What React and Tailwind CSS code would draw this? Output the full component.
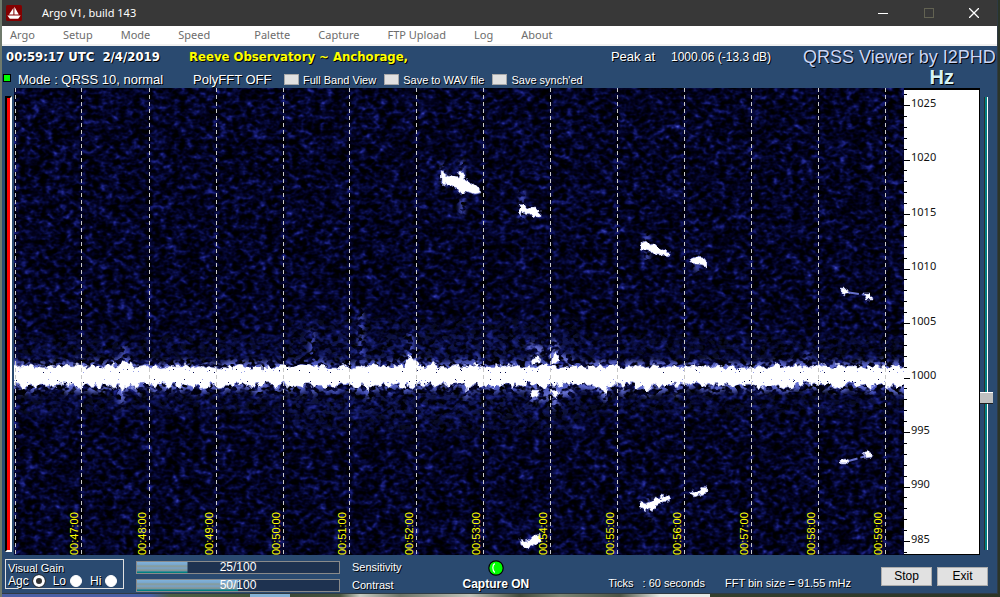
import React, { useState } from "react";

const MENU = ["Argo", "Setup", "Mode", "Speed", "Palette", "Capture", "FTP Upload", "Log", "About"];

// Spectrogram drawing space: x 14..904, y 88..555
const X0 = 14;
const Y0 = 88;
const W = 890;
const H = 467;

const MINUTES = [
  [81, "00:47:00"], [149, "00:48:00"], [216, "00:49:00"], [283, "00:50:00"],
  [349, "00:51:00"], [416, "00:52:00"], [483, "00:53:00"], [550, "00:54:00"],
  [617, "00:55:00"], [684, "00:56:00"], [751, "00:57:00"], [818, "00:58:00"],
  [885, "00:59:00"],
];

const TRACES = [
  "441,170 443,173 452,176 458,178 460,171 464,172 465,180 470,183 479,187 480,193 474,194 466,191 464,193 460,194 458,189 450,186 441,184",
  "519,204 523,205 530,208 536,208 540,211 540,217 535,217 530,214 524,213 520,216",
  "641,242 646,240 649,244 654,243 659,248 664,250 670,252 670,256 662,255 656,255 653,252 648,251 641,250",
  "690,259 697,257 702,258 707,260 707,268 703,265 697,264 691,263",
  "641,502 646,504 650,502 655,498 660,499 662,495 670,497 669,501 662,502 656,505 653,511 648,508 645,511 640,508",
  "689,492 694,491 697,492 702,490 703,486 707,487 707,493 699,495 695,497",
  "520,539 524,541 529,540 533,536 540,534 541,541 534,545 528,548 521,546",
  "841,289 847,289 850,293 845,295 841,293",
  "864,293 870,293 872,299 866,299",
  "841,460 845,459 849,460 846,464 841,464",
  "864,452 869,451 872,457 865,458",
  "531,360 538,357 541,361 532,364",
  "553,353 557,352 559,362 551,363",
  "531,390 541,390 538,395 532,397",
  "550,390 559,391 558,398 553,396",
];

function seeded(seed) {
  let s = seed;
  return () => {
    s = (s * 16807) % 2147483647;
    return s / 2147483647;
  };
}

const PEAKS = { 76: 4, 112: 3, 124: 7, 130: 4, 312: 5, 374: 4, 402: 4, 409: 9, 411: 12, 433: 4, 476: 4 };
const DIPS = { 122: 6, 137: 5, 169: 4, 368: 6, 401: 5, 468: 6, 605: 7, 646: 8 };

function bandPoints() {
  const rnd = seeded(4711);
  const top = [];
  const bottom = [];
  const bump = (map, x) =>
    Object.keys(map).reduce((m, k) => Math.max(m, map[k] - Math.abs(x - Number(k)) * 1.6), 0);
  for (let x = X0 - 6; x <= X0 + W + 9; x += 3) {
    top.push(`${x},${(369 - rnd() * 5 - bump(PEAKS, x)).toFixed(1)}`);
    bottom.unshift(`${x},${(382 + rnd() * 7 + bump(DIPS, x)).toFixed(1)}`);
  }
  return top.concat(bottom).join(" ");
}
const BAND = bandPoints();

function makeSpecks() {
  const rnd = seeded(97);
  return Array.from({ length: 170 }, () => ({
    x: Math.floor(X0 + rnd() * W),
    y: Math.floor(rnd() < 0.5 ? 369 + rnd() * 4 : 379 + rnd() * 4),
    dark: rnd() < 0.4,
  }));
}
const SPECKS = makeSpecks();

const px = (x) => `${((x - X0) / W) * 100}%`;

function Spectrogram() {
  return (
    <div className="relative min-w-0 flex-1 overflow-hidden bg-black">
      <svg className="absolute inset-0 h-full w-full" viewBox={`${X0} ${Y0} ${W} ${H}`} preserveAspectRatio="none" aria-label="Spectrogram">
        <defs>
          <filter id="noise" x="0" y="0" width="100%" height="100%" colorInterpolationFilters="sRGB">
            <feTurbulence type="fractalNoise" baseFrequency="0.15 0.2" numOctaves="2" seed="8" />
            <feColorMatrix values="0.65 0.35 0 0 0  0.65 0.35 0 0 0  0.65 0.35 0 0 0  0 0 0 0 1" result="fine" />
            <feTurbulence type="fractalNoise" baseFrequency="0.06 0.05" numOctaves="2" seed="15" />
            <feColorMatrix values="1 0 0 0 0  1 0 0 0 0  1 0 0 0 0  0 0 0 0 1" result="coarse" />
            <feComposite in="fine" in2="coarse" operator="arithmetic" k1="0" k2="1" k3="0.25" k4="-0.125" />
            <feComponentTransfer>
              <feFuncR type="table" tableValues="0 0 0 0 0 0.01 0.03 0.08 0.15 0.3 0.4" />
              <feFuncG type="table" tableValues="0 0 0 0 0 0.01 0.045 0.1 0.18 0.35 0.45" />
              <feFuncB type="table" tableValues="0 0 0 0 0.04 0.13 0.25 0.42 0.6 0.8 0.9" />
            </feComponentTransfer>
          </filter>
          <filter id="rough" x="-5%" y="-20%" width="110%" height="140%">
            <feTurbulence type="fractalNoise" baseFrequency="0.2" numOctaves="2" seed="3" result="n" />
            <feDisplacementMap in="SourceGraphic" in2="n" scale="6" xChannelSelector="R" yChannelSelector="G" />
          </filter>
          <filter id="halo" x="-5%" y="-60%" width="110%" height="220%" colorInterpolationFilters="sRGB">
            <feGaussianBlur in="SourceGraphic" stdDeviation="2" result="b" />
            <feTurbulence type="fractalNoise" baseFrequency="0.16 0.2" numOctaves="2" seed="21" />
            <feColorMatrix values="0 0 0 0 1  0 0 0 0 1  0 0 0 0 1  7 0 0 0 -3.2" result="m" />
            <feComposite in="b" in2="m" operator="in" />
          </filter>
        </defs>
        <rect x={X0} y={Y0} width={W} height={H} filter="url(#noise)" />
        <g filter="url(#halo)">
          <polygon points={BAND} fill="#6a74d8" stroke="#6a74d8" strokeWidth="9" />
          <rect x={X0} y="335" width={W} height="80" fill="#2a359c" opacity="0.2" />
          <rect x="290" y="318" width="290" height="115" fill="#2a359c" opacity="0.2" />
          <path d="M555 340V366M535 350V364M555 386V408M535 386V396M528 345L572 362M530 400L574 391" stroke="#6a74d8" strokeWidth="7" />
          <path d="M443 163V188M462 160V215M522 190V222M647 234V262M697 250V272M650 495V520M124 345V360M411 330V360M312 330V365M361 310V360M874 385V398M808 352V366" stroke="#4c58cc" strokeWidth="5" />
        </g>
        <path d="M846 292L866 295M845 462L866 456" stroke="#6670cc" strokeWidth="2" strokeDasharray="13 3" />
        <g fill="#ffffff" stroke="#8a92e6" strokeWidth="0.6" filter="url(#rough)">
          <polygon points={BAND} />
          {TRACES.map((p) => (
            <polygon key={p} points={p} />
          ))}
        </g>
        {SPECKS.map((s, i) => (
          <rect key={i} x={s.x} y={s.y} width="1" height="1" fill={s.dark ? "#0b1050" : "#9aa2e6"} />
        ))}
      </svg>
      <svg className="absolute inset-0 h-full w-full">
        <line x1="1.5" x2="1.5" y1="0" y2="100%" stroke="#c8c8c8" strokeDasharray="4 3" shapeRendering="crispEdges" />
        {MINUTES.map(([x, label]) => (
          <g key={label}>
            <line x1={px(x + 0.5)} x2={px(x + 0.5)} y1="0" y2="100%" stroke="#c8c8c8" strokeDasharray="4 3" shapeRendering="crispEdges" />
            <svg x={px(x)} y="100%" overflow="visible">
              <text transform="translate(-3 0) rotate(-90)" fill="#ffff00" className="font-['Liberation_Sans',sans-serif] text-[11px]">
                {label}
              </text>
            </svg>
          </g>
        ))}
      </svg>
    </div>
  );
}

function FrequencyAxis() {
  const ticks = [];
  for (let i = -1; i <= 41; i++) {
    const y = 105.5 + (i * 54.5) / 5;
    if (y > 553) break;
    ticks.push({ y, major: i >= 0 && i % 5 === 0, label: 1025 - i });
  }
  const py = (y) => `${((y - Y0) / (H - 3)) * 100}%`;
  return (
    <div className="w-[76px] shrink-0 border-t-2 border-r border-b border-black bg-white">
      <svg className="-mt-0.5 h-full w-full overflow-visible">
        {ticks.map((t) => (
          <g key={t.label}>
            <line x1="0" x2={t.major ? 6 : 3} y1={py(t.y)} y2={py(t.y)} stroke="#000" shapeRendering="crispEdges" />
            {t.major && (
              <text x="7" y={py(t.y + 1)} fill="#111" className="font-['Noto_Sans',sans-serif] text-[11px]">
                {t.label}
              </text>
            )}
          </g>
        ))}
      </svg>
    </div>
  );
}

function CheckOption({ label }) {
  return (
    <label className="flex items-center gap-1 text-[11px] whitespace-nowrap">
      <input type="checkbox" className="h-[11px] w-[15px] appearance-none border border-[#a8a8a8] bg-[#e1e1e1] checked:bg-[#303030]" />
      {label}
    </label>
  );
}

function LevelSlider({ label, initial }) {
  const [value, setValue] = useState(initial);
  return (
    <label className="flex items-center gap-3 text-[11px] leading-[13px]">
      <span className="relative block h-[13px] w-[204px]">
        <input
          type="range"
          min="0"
          max="100"
          value={value}
          onChange={(e) => setValue(Number(e.target.value))}
          className="block h-[13px] w-full appearance-none border border-[#8a8a8a] bg-[#1e3250] bg-[linear-gradient(#7fb2dc_0px,#7aa5ca_3px,#8b9a8a_4px,#7f9fb8_5px,#78a0c0_7px,#8c9684_8px,#7393ae_9px,#008080_10px)] bg-no-repeat [&::-webkit-slider-thumb]:appearance-none"
          style={{ backgroundSize: `${value}% 100%` }}
        />
        <span className="pointer-events-none absolute inset-0 text-center text-[12px] leading-[13px] text-white text-shadow-none">{value}/100</span>
      </span>
      {label}
    </label>
  );
}

function GainRadio({ label, checked }) {
  return (
    <label className="flex items-center gap-1 text-[12px] leading-3">
      {label}
      <input
        type="radio"
        name="gain"
        defaultChecked={checked}
        className="h-3 w-3 appearance-none rounded-full border border-white bg-white checked:border-3 checked:bg-[#333333] checked:outline-1 checked:outline-[#333333]"
      />
    </label>
  );
}

export default function App() {
  return (
    <div className="flex h-screen flex-col bg-[linear-gradient(90deg,#4a60a5_0%,#4a60a5_15%,#4d5f45_17%,#42543c_25%,#86b2d4_25%,#86b2d4_29%,#3c4a38_29%,#46533f_34%,#c8ccc4_36%,#6b7468_40%,#c0c4ba_47%,#3f4a3c_52%,#7a8474_56%,#4a5446_62%,#e8eae6_66%,#e8eae6_71%,#34402f_71%,#2b3528_100%)] font-['Liberation_Sans',sans-serif] select-none">
      <div className="flex min-h-0 flex-1 border-l-2 border-[#6f7a6c] pr-0.5 pb-[3px]">
        <div className="flex min-h-0 min-w-0 flex-1 flex-col border-r border-b border-[#2f3a44] bg-[#2a4a70] text-white">
          <div className="flex h-[26px] shrink-0 items-center bg-[#383838] pl-1 font-['Noto_Sans',sans-serif]">
            <svg width="16" height="16" viewBox="0 0 16 16" aria-hidden="true">
              <rect width="16" height="16" rx="1.5" fill="#840000" />
              <path d="M7.4 3V9.4H3ZM8.4 1.8L12.8 9.4H8.4Z" fill="#fff" />
              <path d="M1.4 10.6H14.6L12.2 13.8H3.8Z" fill="#fff" />
            </svg>
            <h1 className="ml-5 flex-1 text-[11px]">Argo V1, build 143</h1>
            <div className="flex">
              <button aria-label="Minimize" className="flex h-[26px] w-[46px] items-center justify-center">
                <svg width="10" height="10" shapeRendering="crispEdges"><path d="M0 5.5H10" stroke="#fff" /></svg>
              </button>
              <button aria-label="Maximize" disabled className="flex h-[26px] w-[45px] items-center justify-center">
                <svg width="10" height="10" shapeRendering="crispEdges"><rect x="0.5" y="0.5" width="9" height="9" fill="none" stroke="#626252" /></svg>
              </button>
              <button aria-label="Close" className="flex h-[26px] w-[46px] items-center justify-center">
                <svg width="10" height="10"><path d="M0 0L10 10M10 0L0 10" stroke="#fff" strokeWidth="1.3" /></svg>
              </button>
            </div>
          </div>

          <nav className="flex h-5 shrink-0 items-center gap-7 border-b-2 border-[#f0f0f0] bg-white pl-2 font-['Noto_Sans',sans-serif] text-[11px] text-[#6d6d6d]">
            {MENU.map((m) => (
              <button key={m} className={m === "Palette" ? "ml-4 whitespace-nowrap" : "whitespace-nowrap"}>
                {m}
              </button>
            ))}
          </nav>

          <header className="shrink-0 text-shadow-[1px_1px_0_#000]">
            <div className="flex h-[22px] items-center pl-1 whitespace-nowrap">
              <div className="w-[183px] font-['DejaVu_Sans_Condensed','DejaVu_Sans',sans-serif] text-[13px] font-bold">
                00:59:17 UTC&nbsp; 2/4/2019
              </div>
              <div className="flex-1 font-['DejaVu_Sans_Condensed','DejaVu_Sans',sans-serif] text-[13px] font-bold text-[#ffff00]">
                Reeve Observatory ~ Anchorage,
              </div>
              <div className="mr-4 text-[13px]">Peak at</div>
              <div className="w-[132px] text-[12px]">1000.06 (-13.3 dB)</div>
              <div className="w-[194px] text-[18px] leading-[22px] text-[#ccd6f6]">QRSS Viewer by I2PHD</div>
            </div>
            <div className="flex h-5 items-end pl-4 whitespace-nowrap">
              <div className="w-[175px] text-[13px] leading-[17px]">Mode : QRSS 10, normal</div>
              <div className="w-[91px] text-[13px] leading-[17px]">PolyFFT OFF</div>
              <div className="flex flex-1 gap-2">
                <CheckOption label="Full Band View" />
                <CheckOption label="Save to WAV file" />
                <CheckOption label="Save synch'ed" />
              </div>
              <div className="mr-[43px] self-start text-[20px] leading-[18px] font-bold text-[#d8f4f4]">Hz</div>
            </div>
          </header>

          <main className="flex min-h-0 flex-1">
            <div className="relative flex w-3 shrink-0 pt-2 pb-[3px] pl-[3px]">
              <span className="absolute -top-3.5 left-px h-2 w-2 border border-black bg-[#00ff00]" />
              <div className="w-[7px] border-2 border-t-black border-r-white border-b-white border-l-black bg-[#ff0000]" />
            </div>
            <Spectrogram />
            <FrequencyAxis />
            <div className="flex w-[17px] shrink-0 pt-[9px] pb-[5px]">
              <input
                type="range"
                aria-label="Frequency position"
                min="0"
                max="100"
                defaultValue="67"
                className="h-full w-[13px] appearance-none bg-[linear-gradient(90deg,transparent_4px,#303030_4px,#303030_5px,#008080_5px,#008080_7px,#ffffff_7px,#ffffff_8px,transparent_8px)] [writing-mode:vertical-lr] [&::-webkit-slider-thumb]:h-3 [&::-webkit-slider-thumb]:w-[13px] [&::-webkit-slider-thumb]:appearance-none [&::-webkit-slider-thumb]:border-t [&::-webkit-slider-thumb]:border-b [&::-webkit-slider-thumb]:border-t-white [&::-webkit-slider-thumb]:border-b-[#202020] [&::-webkit-slider-thumb]:bg-[#c0c0c0]"
              />
            </div>
          </main>

          <footer className="flex h-[38px] shrink-0 items-center pr-[9px] pl-[3px] whitespace-nowrap text-shadow-[1px_1px_0_#000]">
            <div role="radiogroup" aria-label="Visual Gain" className="mr-3 h-[30px] w-[119px] border border-[#e0e0e0] pt-0.5 pl-0.5 text-[11px] leading-[13px]">
              <div>Visual Gain</div>
              <div className="flex gap-2">
                <GainRadio label="Agc" checked />
                <GainRadio label="Lo" />
                <GainRadio label="Hi" />
              </div>
            </div>
            <div className="flex flex-col gap-[5px] pt-1">
              <LevelSlider label="Sensitivity" initial={25} />
              <LevelSlider label="Contrast" initial={50} />
            </div>
            <div className="ml-[61px] flex flex-col items-center gap-px pt-0.5">
              <svg width="16" height="16" viewBox="0 0 16 16" aria-hidden="true">
                <circle cx="8" cy="8" r="7.2" fill="#00ff00" stroke="#000" strokeWidth="1.2" />
                <path d="M6.8 3.6C4.2 5 4.2 10.6 6.8 12.4" fill="none" stroke="#fff" strokeWidth="1.2" />
              </svg>
              <div className="text-[12px] leading-[14px] font-bold">Capture ON</div>
            </div>
            <div className="flex flex-1 justify-end gap-5 self-end pb-0.5 text-[11px]">
              <span>Ticks&nbsp;&nbsp; : 60 seconds</span>
              <span>FFT bin size = 91.55 mHz</span>
            </div>
            <div className="ml-[30px] flex gap-[5px] pt-1 text-[12px] text-black text-shadow-none">
              <button className="h-[19px] w-[51px] border border-[#adadad] bg-[#e1e1e1] leading-4">Stop</button>
              <button className="h-[19px] w-[51px] border border-[#adadad] bg-[#e1e1e1] leading-4">Exit</button>
            </div>
          </footer>
        </div>
      </div>
    </div>
  );
}
